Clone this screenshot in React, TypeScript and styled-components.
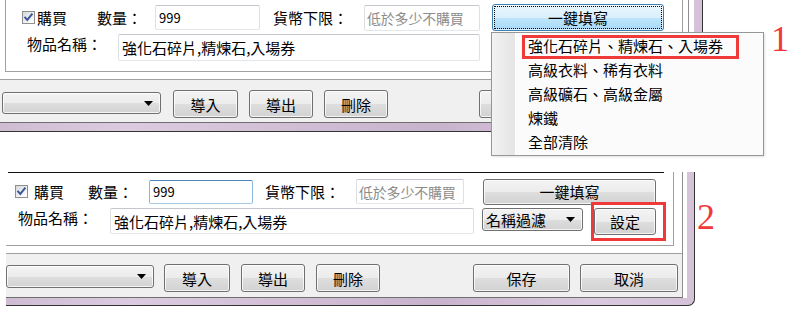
import React from "react";
import styled, { createGlobalStyle, css } from "styled-components";

const GlobalStyle = createGlobalStyle`
  html, body { margin: 0; padding: 0; background: #ffffff; }
  body {
    font-family: "Noto Sans CJK TC", "Noto Sans CJK SC", "Liberation Sans", sans-serif;
    font-size: 15px;
    color: #000;
  }
  #root { width: 805px; height: 327px; }
`;

const Canvas = styled.div`
  position: relative;
  width: 805px;
  height: 327px;
  overflow: hidden;
  display: flex;
  flex-direction: column;
  align-items: flex-start;
`;

const Shot = styled.div<{ $top: number; $left: number }>`
  position: relative;
  margin-top: ${(p) => p.$top}px;
  margin-left: ${(p) => p.$left}px;
`;

const Frame = styled.div<{ $side: number; $base: number }>`
  display: flex;
  padding: 0 ${(p) => p.$side}px ${(p) => p.$base}px 0;
  background: linear-gradient(
    90deg,
    #cfbcd3 0%,
    #dccbe0 18%,
    #d2bfd6 40%,
    #c8b3cc 62%,
    #dac9de 85%,
    #d5c2d9 100%
  );
  border-right: 1px solid #333;
  border-bottom: 1px solid #333;
  border-bottom-right-radius: 7px;
`;

const Inner = styled.div<{ $strip: number }>`
  display: flex;
  background: #fff;
  padding-right: ${(p) => p.$strip}px;
`;

const Client = styled.div<{ $w: number }>`
  width: ${(p) => p.$w}px;
  box-sizing: border-box;
  display: flex;
  flex-direction: column;
  border-right: 1px solid #8d8d8d;
  border-bottom: 1px solid #6f6f6f;
`;

const Panel = styled.div<{ $pl: number; $pr: number }>`
  background: #fff;
  padding: 0 ${(p) => p.$pr}px 7px ${(p) => p.$pl}px;
`;

const Group = styled.div<{ $left?: boolean; $pt: number }>`
  display: flex;
  flex-direction: column;
  gap: 3px;
  padding: ${(p) => p.$pt}px 0 10px 0;
  border-right: 1px solid #a0a0a0;
  border-bottom: 1px solid #a0a0a0;
  border-left: ${(p) => (p.$left ? "1px solid #a0a0a0" : "none")};
`;

const Rule = styled.div<{ $ml: number; $w: number }>`
  height: 1px;
  width: ${(p) => p.$w}px;
  margin-left: ${(p) => p.$ml}px;
  margin-bottom: 2px;
  background: #111;
`;

const Row = styled.div<{ $pl: number; $align: string }>`
  display: flex;
  align-items: ${(p) => p.$align};
  height: 27px;
  padding-left: ${(p) => p.$pl}px;
`;

const Label = styled.span<{ $w: number; $pl?: number }>`
  flex: none;
  box-sizing: border-box;
  width: ${(p) => p.$w}px;
  padding-left: ${(p) => p.$pl ?? 0}px;
  line-height: 19px;
  white-space: nowrap;
`;

const CheckCell = styled.label<{ $w: number; $gap: number }>`
  flex: none;
  display: flex;
  align-items: center;
  gap: ${(p) => p.$gap}px;
  width: ${(p) => p.$w}px;
  line-height: 19px;
  white-space: nowrap;
`;

const Box = styled.span`
  flex: none;
  width: 13px;
  height: 13px;
  box-sizing: border-box;
  border: 1px solid #8e8f8f;
  background: linear-gradient(135deg, #d8d8d8 0%, #f6f6f6 70%, #ffffff 100%);
  display: flex;
`;

const CheckBox = () => (
  <Box>
    <svg width="11" height="11" viewBox="0 0 11 11">
      <path d="M2.2 5.6 L4.3 8 L8.8 2.4" fill="none" stroke="#3b579d" strokeWidth="2" strokeLinecap="square" />
    </svg>
  </Box>
);

const TextBox = styled.input<{ $w: number; $h: number; $focus?: boolean; $num?: boolean }>`
  flex: none;
  box-sizing: border-box;
  margin: 0;
  width: ${(p) => p.$w}px;
  height: ${(p) => p.$h}px;
  padding: 0 3px;
  border: 1px solid;
  border-color: ${(p) => (p.$focus ? "#4a86bd #8ab8de #a9cbe6 #8ab8de" : "#c3c6cc #dcdfe4 #e3e7ec #dcdfe4")};
  border-radius: 2px;
  background: #fff;
  font-family: inherit;
  font-size: ${(p) => (p.$num ? 13 : 15)}px;
  color: #000;
  outline: none;
  &::placeholder {
    color: #8c8c8c;
    font-size: 14px;
    letter-spacing: -0.2px;
  }
  &:placeholder-shown {
    padding: 0 2px;
  }
`;

const buttonFace = css`
  border: 1px solid #707070;
  border-radius: 3px;
  background: linear-gradient(180deg, #f3f3f3 0%, #ececec 50%, #dedede 51%, #d2d2d2 100%);
  box-shadow: inset 0 0 0 1px rgba(255, 255, 255, 0.75);
`;

const hotFace = css`
  border: 1px solid #3c7fb1;
  border-radius: 3px;
  background: linear-gradient(180deg, #eaf6fd 0%, #d9f0fc 50%, #bee6fd 51%, #a7d9f5 100%);
  box-shadow: inset 0 0 0 1px rgba(255, 255, 255, 0.6);
  outline: 1px dotted #000;
  outline-offset: -3px;
`;

const Button = styled.button<{ $w: number; $h: number; $ml?: number; $hot?: boolean }>`
  flex: none;
  box-sizing: border-box;
  margin: 0 0 0 ${(p) => p.$ml ?? 0}px;
  padding: 0;
  width: ${(p) => p.$w}px;
  height: ${(p) => p.$h}px;
  font-family: inherit;
  font-size: 15px;
  color: #000;
  line-height: 1;
  ${(p) => (p.$hot ? hotFace : buttonFace)}
`;

const Combo = styled.div<{ $w: number; $h: number; $ml?: number; $mt?: number }>`
  flex: none;
  box-sizing: border-box;
  display: flex;
  align-items: center;
  justify-content: space-between;
  width: ${(p) => p.$w}px;
  height: ${(p) => p.$h}px;
  margin: ${(p) => p.$mt ?? 0}px 0 0 ${(p) => p.$ml ?? 0}px;
  padding: 0 7px 0 3px;
  line-height: 1;
  white-space: nowrap;
  ${buttonFace}
`;

const Arrow = () => (
  <svg width="9" height="5" viewBox="0 0 9 5">
    <path d="M0 0 H9 L4.5 5 Z" fill="#000" />
  </svg>
);

const Toolbar = styled.div<{ $h: number }>`
  display: flex;
  align-items: flex-start;
  box-sizing: content-box;
  height: ${(p) => p.$h - 10}px;
  padding: 10px 4px 0 0;
  border-top: 1px solid #a0a0a0;
  background: #f0f0f0;
`;

const Spacer = styled.div`
  flex: 1;
`;

const Menu = styled.div`
  position: absolute;
  left: 491px;
  top: 32px;
  width: 273px;
  height: 124px;
  box-sizing: border-box;
  padding: 1px 0;
  border: 1px solid #979797;
  background: linear-gradient(90deg, #f2f2f2 0px, #e4e4e4 23px, #ffffff 23px, #ffffff 24px, #fbfbfb 24px);
  box-shadow: 1px 1px 2px rgba(0, 0, 0, 0.12);
`;

const MenuItem = styled.div<{ $marked?: boolean }>`
  position: relative;
  height: 24px;
  line-height: 24px;
  padding-left: 36px;
  white-space: nowrap;
  ${(p) =>
    p.$marked &&
    css`
      &::after {
        content: "";
        position: absolute;
        left: 30px;
        top: 1px;
        width: 217px;
        height: 24px;
        box-sizing: border-box;
        border: 3px solid #f03a3a;
      }
    `}
`;

const Callout = styled.span<{ $x: number; $y: number }>`
  position: absolute;
  left: ${(p) => p.$x}px;
  top: ${(p) => p.$y}px;
  font-family: "Liberation Serif", "DejaVu Serif", serif;
  font-size: 36px;
  line-height: 36px;
  color: #f03a3a;
`;

const Mark = styled.div<{ $x: number; $y: number; $w: number; $h: number }>`
  position: absolute;
  left: ${(p) => p.$x}px;
  top: ${(p) => p.$y}px;
  width: ${(p) => p.$w}px;
  height: ${(p) => p.$h}px;
  box-sizing: border-box;
  border: 3px solid #f03a3a;
`;

export default function App() {
  return (
    <>
      <GlobalStyle />
      <Canvas>
        <Shot $top={0} $left={0}>
          <Frame $side={8} $base={8}>
            <Inner $strip={5}>
              <Client $w={689}>
                <Panel $pl={5} $pr={5}>
                  <Group $left $pt={4}>
                    <Row $pl={16} $align="center">
                      <CheckCell $w={75} $gap={2}>
                        <CheckBox />
                        <span>購買</span>
                      </CheckCell>
                      <Label $w={58}>數量：</Label>
                      <TextBox $w={105} $h={25} $num defaultValue="999" readOnly />
                      <Label $w={104} $pl={13}>貨幣下限：</Label>
                      <TextBox $w={116} $h={26} placeholder="低於多少不購買" readOnly />
                      <Button $w={172} $h={27} $ml={12} $hot>一鍵填寫</Button>
                    </Row>
                    <Row $pl={21} $align="flex-start">
                      <Label $w={91}>物品名稱：</Label>
                      <TextBox $w={362} $h={27} defaultValue="強化石碎片,精煉石,入場券" readOnly />
                    </Row>
                  </Group>
                </Panel>
                <Toolbar $h={42}>
                  <Combo $w={159} $h={22} $ml={2} $mt={2}>
                    <span />
                    <Arrow />
                  </Combo>
                  <Button $w={65} $h={28} $ml={12}>導入</Button>
                  <Button $w={64} $h={28} $ml={11}>導出</Button>
                  <Button $w={64} $h={28} $ml={11}>刪除</Button>
                  <Spacer />
                  {/* covered by the open menu in this capture */}
                  <Button $w={97} $h={28} aria-label="保存" />
                  <Button $w={97} $h={28} $ml={11} aria-label="取消" />
                </Toolbar>
              </Client>
            </Inner>
          </Frame>
          <Menu>
            <MenuItem $marked>強化石碎片、精煉石、入場券</MenuItem>
            <MenuItem>高級衣料、稀有衣料</MenuItem>
            <MenuItem>高級礦石、高級金屬</MenuItem>
            <MenuItem>煉鐵</MenuItem>
            <MenuItem>全部清除</MenuItem>
          </Menu>
        </Shot>

        <Shot $top={40} $left={6}>
          <Frame $side={7} $base={7}>
            <Inner $strip={4}>
              <Client $w={677}>
                <Panel $pl={0} $pr={8}>
                  <Group $pt={0}>
                    <Rule $ml={2} $w={656} />
                    <Row $pl={9} $align="center">
                      <CheckCell $w={73} $gap={6}>
                        <CheckBox />
                        <span>購買</span>
                      </CheckCell>
                      <Label $w={61}>數量：</Label>
                      <TextBox $w={104} $h={24} $num $focus defaultValue="999" readOnly />
                      <Label $w={103} $pl={12}>貨幣下限：</Label>
                      <TextBox $w={108} $h={25} placeholder="低於多少不購買" readOnly />
                      <Button $w={173} $h={26} $ml={19}>一鍵填寫</Button>
                    </Row>
                    <Row $pl={12} $align="flex-start">
                      <Label $w={92}>物品名稱：</Label>
                      <TextBox $w={364} $h={26} defaultValue="強化石碎片,精煉石,入場券" readOnly />
                      <Combo $w={101} $h={23} $ml={8}>
                        <span>名稱過濾</span>
                        <Arrow />
                      </Combo>
                      <Button $w={62} $h={27} $ml={11}>設定</Button>
                    </Row>
                  </Group>
                </Panel>
                <Toolbar $h={43}>
                  <Combo $w={148} $h={23} $mt={1}>
                    <span />
                    <Arrow />
                  </Combo>
                  <Button $w={66} $h={28} $ml={10}>導入</Button>
                  <Button $w={64} $h={28} $ml={11}>導出</Button>
                  <Button $w={64} $h={28} $ml={11}>刪除</Button>
                  <Spacer />
                  <Button $w={97} $h={28}>保存</Button>
                  <Button $w={98} $h={28} $ml={10}>取消</Button>
                </Toolbar>
              </Client>
            </Inner>
          </Frame>
        </Shot>

        <Callout $x={771} $y={21}>1</Callout>
        <Callout $x={697} $y={199}>2</Callout>
        <Mark $x={591} $y={202} $w={75} $h={39} />
      </Canvas>
    </>
  );
}
